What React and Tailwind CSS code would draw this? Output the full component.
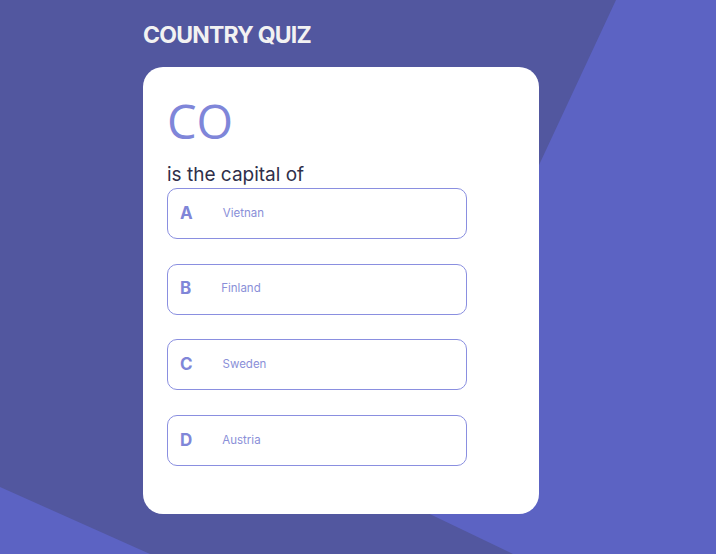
import React from "react";

const options = [
  { letter: "A", name: "Vietnan" },
  { letter: "B", name: "Finland" },
  { letter: "C", name: "Sweden" },
  { letter: "D", name: "Austria" },
];

const Background = () => (
  <svg className="absolute inset-0 h-full w-full" viewBox="0 0 716 554" preserveAspectRatio="none">
    <rect width="716" height="554" fill="#5c63c3" />
    <polygon points="0,0 616,0 386,493 513,554 150,554 0,487" fill="#52579f" />
  </svg>
);

export default function App() {
  return (
    <div className="relative h-[554px] w-[716px] overflow-hidden font-['Open_Sans',sans-serif]">
      <Background />
      <div className="relative pl-[143px] pt-[20px]">
        <h1 className="text-[23px] font-bold leading-[30px] tracking-[-0.8px] text-[#f2f2f2] font-['Inter',sans-serif]">
          COUNTRY QUIZ
        </h1>
        <div className="mt-[17px] h-[447px] w-[396px] rounded-[20px] bg-white pl-[24px] pt-[26px]">
          <div className="text-[47px] leading-[56px] text-[#7f86d9]">CO</div>
          <p className="mt-[16px] text-[19px] leading-[20px] text-[#2f2f4a] font-['Inter',sans-serif]">
            is the capital of
          </p>
          <div className="mt-[3px] flex flex-col gap-[24.6px]">
            {options.map((o) => (
              <div
                key={o.letter}
                className="flex h-[51px] w-[300px] items-center gap-[30px] rounded-[10px] border border-[#8a8fe0] px-[12px]"
              >
                <span className="text-[17px] font-bold text-[#8086d8] font-['Inter',sans-serif]">{o.letter}</span>
                <span className="text-[11.5px] text-[#8a8fd8] font-['Inter',sans-serif]">{o.name}</span>
              </div>
            ))}
          </div>
        </div>
      </div>
    </div>
  );
}
